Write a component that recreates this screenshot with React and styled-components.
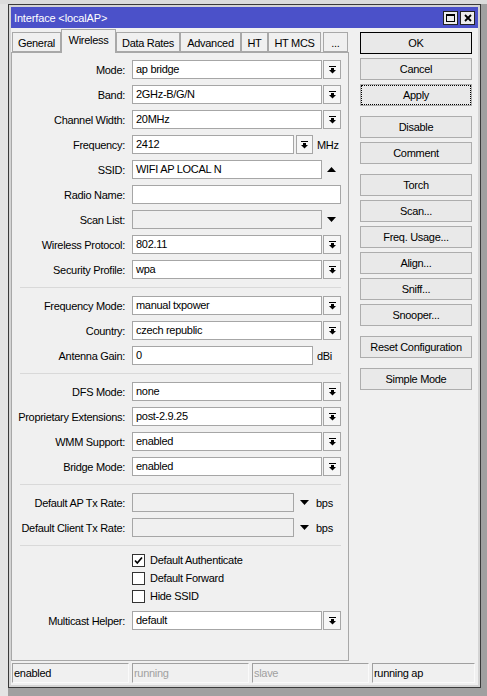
import React from 'react';
import styled, { createGlobalStyle } from 'styled-components';

const Global = createGlobalStyle`
  html, body { margin: 0; padding: 0; }
  body {
    width: 487px;
    height: 696px;
    overflow: hidden;
    background:
      linear-gradient(#dcdcdc 0 4px, transparent 4px),
      linear-gradient(to right, #e4e4e4 0 8px, #a0a0a0 8px);
    font-family: "Liberation Sans", Arial, sans-serif;
    font-size: 11px;
    letter-spacing: -0.3px;
    color: #000;
  }
`;

const Window = styled.div`
  margin: 4px 0 0 8px;
  width: 473px;
  box-sizing: border-box;
  border: 1px solid #3a3a3a;
  background: #f0f0f0;
  padding: 2px;
  box-shadow: inset 0 0 0 2px #d4d4d4;
  display: flex;
  flex-direction: column;
`;

const TitleBar = styled.div`
  height: 21px;
  background: #4b51c9;
  color: #fff;
  display: flex;
  align-items: center;
  padding: 0 3px;
  letter-spacing: -0.15px;
`;

const TitleText = styled.span`
  flex: 1;
`;

const TitleBtn = styled.div`
  width: 15px;
  height: 14px;
  box-sizing: border-box;
  border: 1px solid #222;
  background: #ececec;
  display: grid;
  place-items: center;
  margin-left: 2px;
`;

const Body = styled.div`
  display: flex;
  padding-top: 1px;
`;

const LeftCol = styled.div`
  width: 338px;
  display: flex;
  flex-direction: column;
`;

const Tabs = styled.div`
  display: flex;
  align-items: flex-end;
  height: 23px;
  padding-left: 1px;
`;

const Tab = styled.div`
  width: ${p => p.$w}px;
  height: ${p => (p.$active ? 24 : 20)}px;
  margin-left: ${p => p.$gap || 0}px;
  margin-bottom: ${p => (p.$active ? -1 : 0)}px;
  box-sizing: border-box;
  border: 1px solid #a8a8a8;
  border-bottom: ${p => (p.$active ? 'none' : '1px solid #a8a8a8')};
  background: #f0f0f0;
  position: relative;
  z-index: ${p => (p.$active ? 2 : 1)};
  display: flex;
  justify-content: center;
  padding-top: 4px;
  white-space: nowrap;
`;

const Panel = styled.div`
  height: 609px;
  box-sizing: border-box;
  border: 1px solid #a8a8a8;
  padding-top: 4px;
  display: flex;
  flex-direction: column;
`;

const Row = styled.div`
  display: flex;
  align-items: center;
  height: 25px;
  margin-top: ${p => p.$mt || 0}px;
  flex: none;
`;

const Label = styled.div`
  width: 113px;
  margin-right: 7px;
  text-align: right;
  white-space: nowrap;
  flex: none;
`;

const Fields = styled.div`
  display: flex;
  align-items: center;
  width: 209px;
`;

const Field = styled.div`
  ${p => (p.$w ? `width: ${p.$w}px; flex: none;` : 'flex: 1;')}
  height: 19px;
  box-sizing: border-box;
  border: 1px solid #a6a6a6;
  background: ${p => (p.$disabled ? '#f0f0f0' : '#fff')};
  padding: 0 3px;
  line-height: 17px;
  white-space: nowrap;
  overflow: hidden;
`;

const DropBtn = styled.div`
  width: ${p => p.$w || 18}px;
  height: 19px;
  margin-left: ${p => p.$gap ?? 1}px;
  box-sizing: border-box;
  border: 1px solid #a6a6a6;
  background: #f6f6f6;
  display: grid;
  place-items: center;
  flex: none;
`;

const ArrowCell = styled.div`
  width: ${p => p.$w}px;
  display: flex;
  justify-content: center;
  align-items: center;
  flex: none;
`;

const Unit = styled.span`
  margin-left: ${p => p.$gap ?? 4}px;
  white-space: nowrap;
`;

const Separator = styled.div`
  height: 11px;
  display: flex;
  align-items: center;
  padding: 0 7px 0 8px;
  flex: none;
`;

const Line = styled.div`
  flex: 1;
  height: 1px;
  background: #d9d9d9;
`;

const CheckRow = styled.div`
  height: 18px;
  display: flex;
  align-items: center;
  padding-left: 120px;
  gap: 5px;
  flex: none;
`;

const CheckBox = styled.div`
  width: 13px;
  height: 13px;
  box-sizing: border-box;
  border: 1px solid #333;
  background: #fff;
  display: grid;
  place-items: center;
`;

const RightCol = styled.div`
  width: 112px;
  margin-left: 11px;
  padding-top: 3px;
  display: flex;
  flex-direction: column;
`;

const Button = styled.div`
  height: 22px;
  box-sizing: border-box;
  margin-top: ${p => p.$mt}px;
  border: 1px solid ${p => (p.$primary ? '#000' : '#adadad')};
  background: #e9e9e9;
  text-align: center;
  line-height: 20px;
  white-space: nowrap;
  ${p => (p.$focus ? 'outline: 1px dotted #000; outline-offset: -2px;' : '')}
`;

const StatusBar = styled.div`
  display: grid;
  grid-template-columns: 117px 117px 117px 1fr;
  column-gap: 3px;
  margin: 2px 0 2px 0;
  padding: 0 3px 0 1px;
`;

const Cell = styled.div`
  height: 20px;
  box-sizing: border-box;
  border-top: 1px solid #a0a0a0;
  border-left: 1px solid #a0a0a0;
  border-right: 1px solid #fafafa;
  border-bottom: 1px solid #fafafa;
  padding-left: 1px;
  line-height: 18px;
  color: ${p => (p.$dim ? '#a0a0a0' : '#000')};
`;

const DropIcon = () => (
  <svg width="7" height="8" viewBox="0 0 7 8" shapeRendering="crispEdges">
    <rect x="0" y="0" width="7" height="1" fill="#000" />
    <rect x="2" y="2" width="3" height="2" fill="#000" />
    <polygon points="0,4 7,4 3.5,7.6" fill="#000" shapeRendering="auto" />
  </svg>
);

const Tri = ({ up }) => (
  <svg width="9" height="5" viewBox="0 0 9 5">
    {up ? <polygon points="0,5 9,5 4.5,0" fill="#000" /> : <polygon points="0,0 9,0 4.5,5" fill="#000" />}
  </svg>
);

const Check = () => (
  <svg width="11" height="11" viewBox="0 0 11 11">
    <path d="M2 5.5 L4.3 8 L9 2.5" stroke="#000" strokeWidth="1.7" fill="none" />
  </svg>
);

const MaxIcon = () => (
  <svg width="9" height="8" viewBox="0 0 9 8" shapeRendering="crispEdges">
    <rect x="0.5" y="0.5" width="8" height="7" fill="none" stroke="#000" />
    <rect x="0" y="0" width="9" height="2" fill="#000" />
  </svg>
);

const CloseIcon = () => (
  <svg width="8" height="8" viewBox="0 0 8 8">
    <path d="M1 1 L7 7 M7 1 L1 7" stroke="#000" strokeWidth="1.8" />
  </svg>
);

const SelectRow = ({ label, value, mt }) => (
  <Row $mt={mt}>
    <Label>{label}</Label>
    <Fields>
      <Field>{value}</Field>
      <DropBtn><DropIcon /></DropBtn>
    </Fields>
  </Row>
);

const tabs = [
  { t: 'General', w: 49 },
  { t: 'Wireless', w: 55, active: true },
  { t: 'Data Rates', w: 64 },
  { t: 'Advanced', w: 61 },
  { t: 'HT', w: 27 },
  { t: 'HT MCS', w: 53 },
  { t: '...', w: 25, gap: 2 },
];

const buttons = [
  { t: 'OK', mt: 0, primary: true },
  { t: 'Cancel', mt: 4 },
  { t: 'Apply', mt: 4, focus: true },
  { t: 'Disable', mt: 10 },
  { t: 'Comment', mt: 4 },
  { t: 'Torch', mt: 10 },
  { t: 'Scan...', mt: 4 },
  { t: 'Freq. Usage...', mt: 4 },
  { t: 'Align...', mt: 4 },
  { t: 'Sniff...', mt: 4 },
  { t: 'Snooper...', mt: 4 },
  { t: 'Reset Configuration', mt: 10 },
  { t: 'Simple Mode', mt: 10 },
];

export default function App() {
  return (
    <>
      <Global />
      <Window>
        <TitleBar>
          <TitleText>Interface &lt;localAP&gt;</TitleText>
          <TitleBtn><MaxIcon /></TitleBtn>
          <TitleBtn><CloseIcon /></TitleBtn>
        </TitleBar>
        <Body>
          <LeftCol>
            <Tabs>
              {tabs.map(t => (
                <Tab key={t.t} $w={t.w} $active={t.active} $gap={t.gap}>{t.t}</Tab>
              ))}
            </Tabs>
            <Panel>
              <SelectRow label="Mode:" value="ap bridge" />
              <SelectRow label="Band:" value="2GHz-B/G/N" />
              <SelectRow label="Channel Width:" value="20MHz" />
              <Row>
                <Label>Frequency:</Label>
                <Fields>
                  <Field $w={162}>2412</Field>
                  <DropBtn $w={17} $gap={2}><DropIcon /></DropBtn>
                  <Unit>MHz</Unit>
                </Fields>
              </Row>
              <Row>
                <Label>SSID:</Label>
                <Fields>
                  <Field $w={190}>WIFI AP LOCAL N</Field>
                  <ArrowCell $w={19}><Tri up /></ArrowCell>
                </Fields>
              </Row>
              <Row>
                <Label>Radio Name:</Label>
                <Fields>
                  <Field />
                </Fields>
              </Row>
              <Row>
                <Label>Scan List:</Label>
                <Fields>
                  <Field $w={190} $disabled />
                  <ArrowCell $w={19}><Tri /></ArrowCell>
                </Fields>
              </Row>
              <SelectRow label="Wireless Protocol:" value="802.11" />
              <SelectRow label="Security Profile:" value="wpa" />
              <Separator><Line /></Separator>
              <SelectRow label="Frequency Mode:" value="manual txpower" />
              <SelectRow label="Country:" value="czech republic" />
              <Row>
                <Label>Antenna Gain:</Label>
                <Fields>
                  <Field $w={181}>0</Field>
                  <Unit>dBi</Unit>
                </Fields>
              </Row>
              <Separator><Line /></Separator>
              <SelectRow label="DFS Mode:" value="none" />
              <SelectRow label="Proprietary Extensions:" value="post-2.9.25" />
              <SelectRow label="WMM Support:" value="enabled" />
              <SelectRow label="Bridge Mode:" value="enabled" />
              <Separator><Line /></Separator>
              <Row>
                <Label>Default AP Tx Rate:</Label>
                <Fields>
                  <Field $w={162} $disabled />
                  <ArrowCell $w={20}><Tri /></ArrowCell>
                  <Unit $gap={2}>bps</Unit>
                </Fields>
              </Row>
              <Row>
                <Label>Default Client Tx Rate:</Label>
                <Fields>
                  <Field $w={162} $disabled />
                  <ArrowCell $w={20}><Tri /></ArrowCell>
                  <Unit $gap={2}>bps</Unit>
                </Fields>
              </Row>
              <Separator><Line /></Separator>
              <CheckRow><CheckBox><Check /></CheckBox>Default Authenticate</CheckRow>
              <CheckRow><CheckBox />Default Forward</CheckRow>
              <CheckRow><CheckBox />Hide SSID</CheckRow>
              <SelectRow label="Multicast Helper:" value="default" mt={3} />
            </Panel>
          </LeftCol>
          <RightCol>
            {buttons.map(b => (
              <Button key={b.t} $mt={b.mt} $primary={b.primary} $focus={b.focus}>{b.t}</Button>
            ))}
          </RightCol>
        </Body>
        <StatusBar>
          <Cell>enabled</Cell>
          <Cell $dim>running</Cell>
          <Cell $dim>slave</Cell>
          <Cell>running ap</Cell>
        </StatusBar>
      </Window>
    </>
  );
}
